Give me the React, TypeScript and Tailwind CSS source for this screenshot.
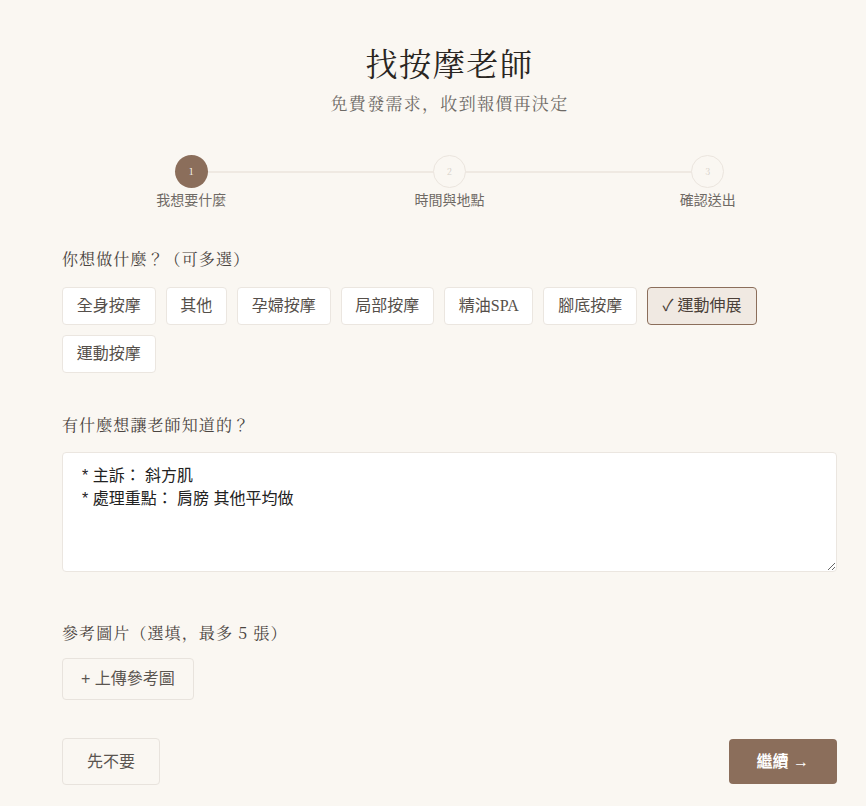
import React from "react";

const serif = '"Noto Serif CJK JP","Liberation Serif",serif';
const chipFont = '"Liberation Serif","Noto Sans CJK TC",serif';
const sans = '"Liberation Sans","Noto Sans CJK TC",sans-serif';

const chips = ["全身按摩", "其他", "孕婦按摩", "局部按摩", "精油SPA", "腳底按摩", "運動伸展", "運動按摩"];
const selected = "運動伸展";

function Step({ n, label, active }: { n: string; label: string; active?: boolean }) {
  return (
    <div className="relative z-10 flex flex-col items-center">
      <div
        className={
          active
            ? "flex h-[33px] w-[33px] items-center justify-center rounded-full bg-[#8b6e5b] text-[9px] text-white"
            : "flex h-[33px] w-[33px] items-center justify-center rounded-full border border-[#ebe5de] bg-[#faf7f2] text-[9px] text-[#d3cdc6]"
        }
      >
        {n}
      </div>
      <div className="mt-[2px] text-[14px] leading-[20px] text-[#6f6a65]" style={{ fontFamily: sans }}>
        {label}
      </div>
    </div>
  );
}

export default function App() {
  return (
    <div className="min-h-screen w-full bg-[#faf7f2]" style={{ fontFamily: serif }}>
      <div className="ml-[62px] w-[775px] pt-[43px] pb-[21px]">
        <h1 className="text-center text-[32px] leading-[38px] tracking-[0.05em] text-[#2a2622]">找按摩老師</h1>
        <p className="mt-[9px] text-center text-[17px] leading-[26px] tracking-[1.3px] text-[#6e6a66]">
          免費發需求，收到報價再決定
        </p>

        <div className="relative mt-[39px] grid grid-cols-3">
          <div className="absolute left-[129px] right-[130px] top-[15.5px] h-[2px] bg-[#efe9e2]" />
          <Step n="1" label="我想要什麼" active />
          <Step n="2" label="時間與地點" />
          <Step n="3" label="確認送出" />
        </div>

        <div className="mt-[37px] text-[16px] leading-[24px] tracking-[1.1px] text-[#4a4440]">你想做什麼？（可多選）</div>
        <div className="mt-[16px] flex flex-wrap gap-[10px]" style={{ fontFamily: chipFont }}>
          {chips.map((c) =>
            c === selected ? (
              <div
                key={c}
                className="flex h-[38px] items-center rounded-[4px] border border-[#8b6e5b] bg-[#f0e9e2] px-[14.5px] text-[16px] text-[#4a3f38]"
              >
                ✓ {c}
              </div>
            ) : (
              <div
                key={c}
                className="flex h-[38px] items-center rounded-[4px] border border-[#ebe6e0] bg-white px-[13.75px] text-[16px] text-[#554f4a]"
              >
                {c}
              </div>
            )
          )}
        </div>

        <div className="mt-[40px] text-[16px] leading-[24px] tracking-[1.1px] text-[#4a4440]">有什麼想讓老師知道的？</div>
        <textarea
          className="mt-[15px] block h-[120px] w-full rounded-[4px] border border-[#ebe6e0] bg-white pl-[19px] pr-4 pt-[11px] text-[16px] leading-[23px] text-[#222] outline-none"
          style={{ fontFamily: sans }}
          defaultValue={"* 主訴： 斜方肌\n* 處理重點： 肩膀 其他平均做"}
        />

        <div className="mt-[49px] text-[16px] leading-[24px] tracking-[1.1px] text-[#4a4440]">參考圖片（選填，最多 5 張）</div>
        <div className="mt-[13px] flex">
          <div
            className="flex h-[42px] items-center rounded-[4px] border border-[#e8e3dd] px-[18px] text-[16px] text-[#5a5550]"
            style={{ fontFamily: sans }}
          >
            + 上傳參考圖
          </div>
        </div>

        <div className="mt-[38px] flex items-center justify-between" style={{ fontFamily: sans }}>
          <div className="flex h-[47px] items-center rounded-[4px] border border-[#e8e3dd] px-6 text-[16px] text-[#5a5550]">
            先不要
          </div>
          <div className="flex h-[45px] items-center rounded-[4px] bg-[#8b6e5b] px-[28px] text-[16px] font-bold text-white">
            繼續 →
          </div>
        </div>
      </div>
    </div>
  );
}
